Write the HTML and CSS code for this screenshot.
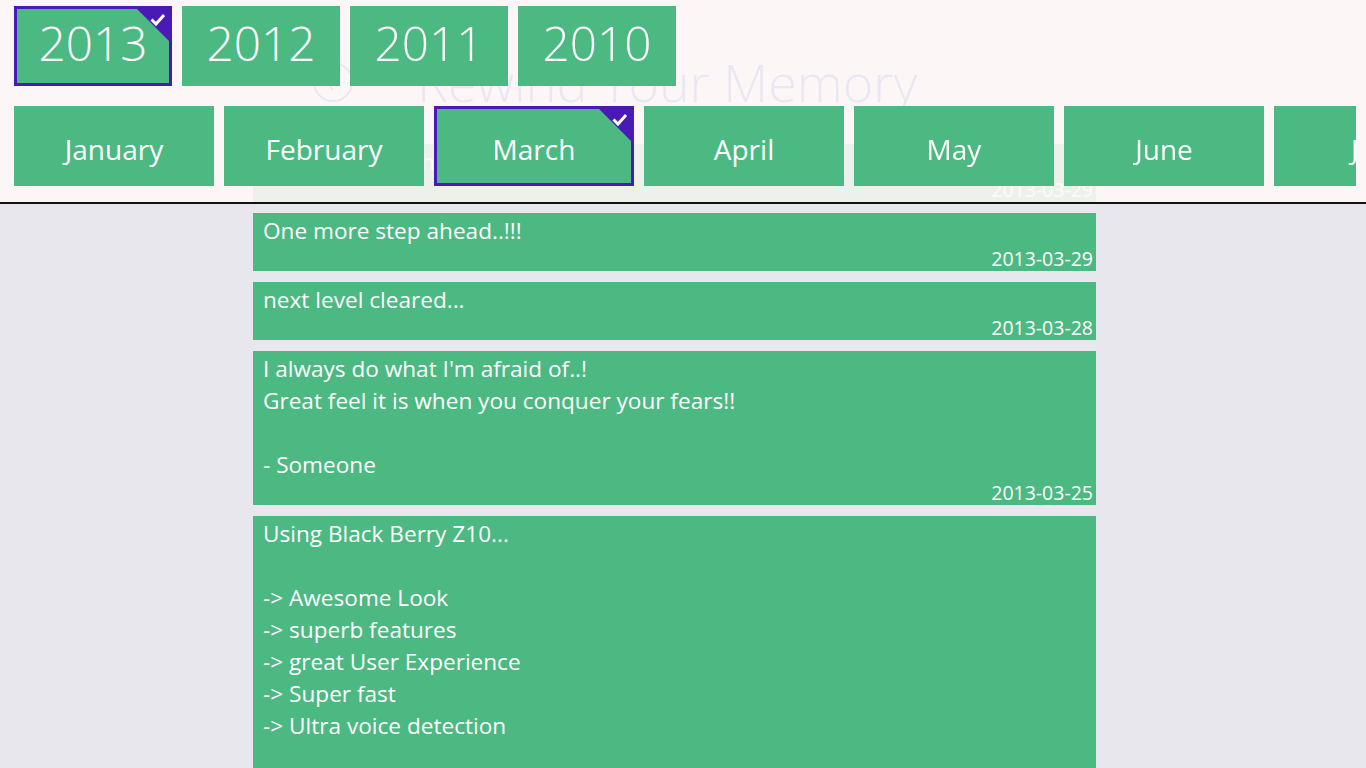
FILE: index.html
```html
<!DOCTYPE html>
<html>
<head>
<meta charset="utf-8">
<link rel="stylesheet" href="styles.css">
</head>
<body>
<main class="feed">
  <article class="note"><div class="note-text">Celebrating with friends..!!</div><div class="note-date">2013-03-29</div></article>
  <article class="note"><div class="note-text">One more step ahead..!!!</div><div class="note-date">2013-03-29</div></article>
  <article class="note"><div class="note-text">next level cleared...</div><div class="note-date">2013-03-28</div></article>
  <article class="note"><div class="note-text">I always do what I'm afraid of..!
Great feel it is when you conquer your fears!!

- Someone</div><div class="note-date">2013-03-25</div></article>
  <article class="note"><div class="note-text">Using Black Berry Z10...

-&gt; Awesome Look
-&gt; superb features
-&gt; great User Experience
-&gt; Super fast
-&gt; Ultra voice detection

Loving it..!!</div><div class="note-date">2013-03-22</div></article>
</main>

<header class="top">
  <div class="watermark">
    <svg class="wm-icon" width="44" height="44" viewBox="0 0 44 44"><circle cx="22" cy="22" r="19" fill="none" stroke="currentColor" stroke-width="2"/><polyline points="22,12 16,22 22,30" fill="none" stroke="currentColor" stroke-width="2"/></svg>
    <span class="wm-text">Rewind Your Memory</span>
  </div>
  <div class="years">
    <div class="tile year selected">2013<svg class="check" width="16" height="14" viewBox="0 0 16 14"><polyline points="1.5,6.5 6,11 14,2" fill="none" stroke="#fff" stroke-width="3"/></svg></div>
    <div class="tile year">2012</div>
    <div class="tile year">2011</div>
    <div class="tile year">2010</div>
  </div>
  <div class="months">
    <div class="tile month">January</div>
    <div class="tile month">February</div>
    <div class="tile month selected">March<svg class="check" width="16" height="14" viewBox="0 0 16 14"><polyline points="1.5,6.5 6,11 14,2" fill="none" stroke="#fff" stroke-width="3"/></svg></div>
    <div class="tile month">April</div>
    <div class="tile month">May</div>
    <div class="tile month">June</div>
    <div class="tile month">July</div>
    <div class="tile month">August</div>
  </div>
</header>
</body>
</html>
```
FILE: styles.css
```css
html, body {
  margin: 0;
  padding: 0;
}
body {
  background: #e8e7ee;
  font-family: "Open Sans", "Noto Sans", sans-serif;
  color: #fff;
  height: 768px;
  overflow: hidden;
}

.feed {
  width: 843px;
  margin-left: 253px;
  padding-top: 144px;
  display: flex;
  flex-direction: column;
  gap: 11px;
}
.note {
  background: #4cb882;
  padding-top: 2px;
  display: flex;
  flex-direction: column;
}
.note-text {
  padding-left: 10px;
  font-size: 22.6px;
  line-height: 32px;
  white-space: pre-line;
}
.note-date {
  text-align: right;
  padding-right: 3px;
  font-size: 19.5px;
  line-height: 24px;
}

.top {
  position: fixed;
  top: 0;
  left: 0;
  width: 1366px;
  box-sizing: border-box;
  padding: 6px 10px 0 14px;
  background: rgba(254, 248, 246, 0.9);
  border-bottom: 2px solid #121212;
  height: 204px;
  overflow: hidden;
}
.watermark {
  position: absolute;
  left: 311px;
  top: 47px;
  display: flex;
  align-items: center;
  gap: 62px;
  color: #ebe7f2;
  z-index: 0;
}
.wm-text {
  font-size: 52px;
  font-weight: 300;
  line-height: 70px;
}
.years, .months {
  position: relative;
  z-index: 1;
  display: flex;
  gap: 10px;
}
.months {
  margin-top: 20px;
  overflow: hidden;
}
.tile {
  position: relative;
  flex-shrink: 0;
  box-sizing: border-box;
  height: 80px;
  background: #4cb882;
  display: flex;
  align-items: center;
  justify-content: center;
}
.year {
  width: 158px;
  font-size: 47.7px;
  font-weight: 300;
  padding-bottom: 7px;
}
.month {
  width: 200px;
  font-size: 28px;
  padding-top: 6px;
}
.selected {
  border: 3px solid #4a1ab7;
}
.selected::after {
  content: "";
  position: absolute;
  top: -3px;
  right: -3px;
  width: 38px;
  height: 38px;
  background: #4a1ab7;
  clip-path: polygon(0 0, 100% 0, 100% 100%);
}
.check {
  position: absolute;
  top: 4px;
  right: 3px;
  z-index: 2;
}
```
